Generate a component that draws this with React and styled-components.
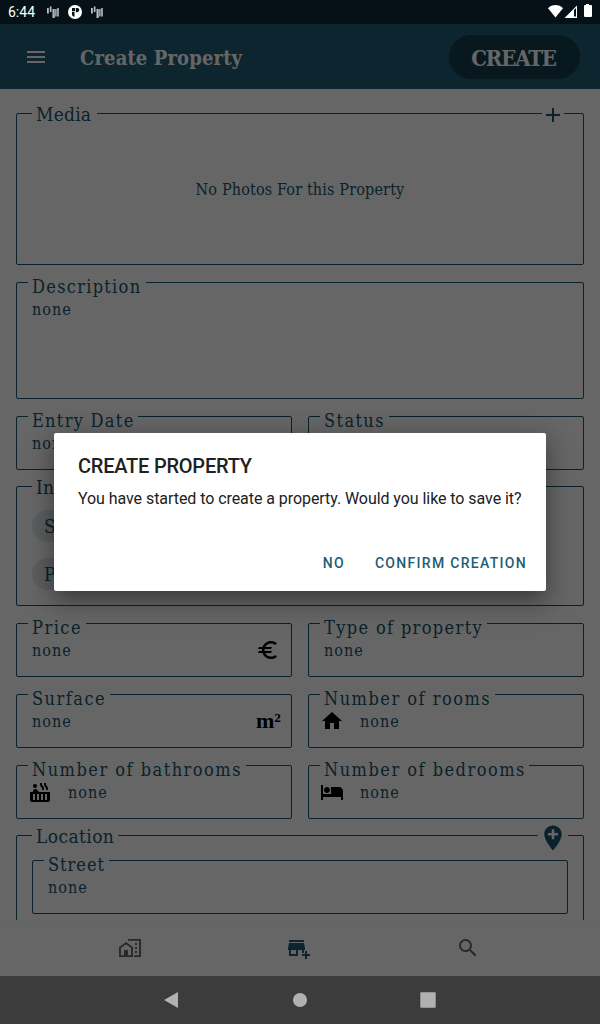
import React from "react";
import styled, { createGlobalStyle } from "styled-components";
import {
  MdMenu, MdAdd, MdEuro, MdHome, MdHotTub, MdHotel, MdAddLocation,
  MdAddBusiness, MdSearch,
} from "react-icons/md";

const slab = '"DejaVu Serif Condensed", "DejaVu Serif", serif';
const ink = "#19556b";

const GlobalStyle = createGlobalStyle`
  * { box-sizing: border-box; }
  body { margin: 0; background: #fff; font-family: Roboto, sans-serif; overflow: hidden; }
  svg { display: block; flex: none; }
`;

const Screen = styled.div`
  position: relative;
  width: 600px;
  height: 1024px;
  display: flex;
  flex-direction: column;
  overflow: hidden;
`;

const StatusBar = styled.div`
  height: 24px;
  flex: none;
  display: flex;
  align-items: center;
  justify-content: space-between;
  padding: 0 7px 0 8px;
  background: #051116;
  color: #fff;
  font-size: 14px;
  position: relative;
  z-index: 2;
`;

const StatusGroup = styled.div`
  display: flex;
  align-items: center;
`;

const Clock = styled.span`
  width: 38px;
  white-space: nowrap;
`;

const AppBar = styled.header`
  height: 65px;
  flex: none;
  display: flex;
  align-items: center;
  padding: 0 20px 0 24px;
  background: #1e5e74;
  color: #fff;
`;

const Title = styled.h1`
  margin: 2px auto 0 32px;
  font: bold 20px/28px ${slab};
  font-stretch: condensed;
  letter-spacing: 0.13px;
  white-space: nowrap;
`;

const CreateButton = styled.button`
  width: 131px;
  height: 44px;
  border: 0;
  border-radius: 22px;
  padding: 2px 2px 0 0;
  background: #123e4d;
  color: #fff;
  font: bold 22px/42px ${slab};
  font-stretch: condensed;
  letter-spacing: -1.1px;
`;

const Form = styled.main`
  flex: 1;
  min-height: 0;
  overflow: hidden;
  padding: 24px 16px 0;
  display: flex;
  flex-direction: column;
  color: ${ink};
`;

const Row = styled.div`
  display: flex;
  flex: none;
  gap: 16px;
  margin-bottom: ${(p) => p.$gap ?? 17}px;
`;

const Box = styled.section`
  position: relative;
  flex: 1;
  height: ${(p) => p.$h ?? 54}px;
  border: 1px solid ${ink};
  border-radius: 2px;
`;

const Legend = styled.span`
  position: absolute;
  left: ${(p) => (p.$group ? 15 : 11)}px;
  top: ${(p) => (p.$group ? -12 : -8)}px;
  height: 24px;
  padding: 0 4px;
  width: ${(p) => p.$w}px;
  background: #fff;
  font: ${(p) => (p.$group ? 19 : 18)}px/24px ${slab};
  font-stretch: condensed;
  letter-spacing: ${(p) => p.$track ?? 1.5}px;
  white-space: nowrap;
`;

const CornerAction = styled.span`
  position: absolute;
  right: ${(p) => p.$right}px;
  top: ${(p) => p.$top}px;
  width: ${(p) => p.$w}px;
  display: flex;
  justify-content: center;
  background: #fff;
`;

const Value = styled.div`
  display: flex;
  align-items: center;
  height: 24px;
  margin-top: 15px;
  padding: 0 7px 0 ${(p) => (p.$lead ? 11 : 15)}px;
  font: 16px/24px ${slab};
  font-stretch: condensed;
  letter-spacing: 1px;
`;

const IconSlot = styled.span`
  width: ${(p) => (p.$end ? 28 : 40)}px;
  margin-left: ${(p) => (p.$end ? "auto" : 0)};
  margin-bottom: 2px;
  display: flex;
  color: #000;
  letter-spacing: 0;
  font: bold 22px/24px "Liberation Serif", serif;
`;

const Empty = styled.p`
  margin: 0;
  padding-top: 64px;
  text-align: center;
  font: 16px/24px ${slab};
  font-stretch: condensed;
  letter-spacing: 0.16px;
`;

const Chips = styled.div`
  display: flex;
  flex-direction: column;
  align-items: flex-start;
  gap: 16px;
  padding: 23px 15px;
`;

const Chip = styled.span`
  height: 32px;
  padding: 0 12px;
  border-radius: 16px;
  background: #e3e9ec;
  font: 19px/33px ${slab};
  font-stretch: condensed;
`;

const Nested = styled.div`
  display: flex;
  padding: 24px 15px;
`;

const Tabs = styled.nav`
  height: 56px;
  flex: none;
  display: flex;
  justify-content: space-between;
  align-items: center;
  padding: 0 120px 1px 118px;
  background: #fff;
  border-top: 1px solid #f8f8f8;
  color: #666;
`;

const SystemNav = styled.div`
  height: 48px;
  flex: none;
  display: flex;
  justify-content: space-between;
  align-items: center;
  padding: 0 160px;
  background: #3c3c3c;
  position: relative;
  z-index: 2;
`;

const Scrim = styled.div`
  position: absolute;
  inset: 24px 0 48px;
  background: rgba(0, 0, 0, 0.6);
`;

const Dialog = styled.div`
  position: absolute;
  left: 54px;
  top: 433px;
  width: 492px;
  height: 158px;
  border-radius: 2px;
  background: #fff;
  color: #212121;
  padding: 19px 11px 0 24px;
  display: flex;
  flex-direction: column;
  box-shadow: 0 11px 15px -7px rgba(0, 0, 0, 0.2), 0 12px 30px 3px rgba(0, 0, 0, 0.2), 0 4px 20px 4px rgba(0, 0, 0, 0.12);
`;

const DialogTitle = styled.h2`
  margin: 0;
  font: 500 20px/28px Roboto, sans-serif;
  letter-spacing: -0.22px;
`;

const DialogText = styled.p`
  margin: 7px 0 0;
  font: 16px/24px Roboto, sans-serif;
  letter-spacing: -0.063px;
  white-space: nowrap;
`;

const DialogActions = styled.div`
  margin-top: 34px;
  display: flex;
  justify-content: flex-end;
  gap: 14px;
`;

const TextButton = styled.button`
  border: 0;
  background: none;
  padding: 0 8px;
  color: #1e5e74;
  font: 500 14px/36px Roboto, sans-serif;
  letter-spacing: 1.3px;
`;

function Field({ label, w, track, h, lead, end }) {
  return (
    <Box $h={h}>
      <Legend $w={w} $track={track}>{label}</Legend>
      <Value $lead={!!lead}>
        {lead && <IconSlot>{lead}</IconSlot>}
        none
        {end && <IconSlot $end>{end}</IconSlot>}
      </Value>
    </Box>
  );
}

function Bars() {
  return (
    <svg width="14" height="14" viewBox="0 0 14 14" fill="#b9bdbf">
      <path d="M1 3h1.800v5.500H1zM3.800 1.500h1.700v5.500H3.800zM6.500 4h2.200v9H6.500zM9.200 4h1.400v7.500H9.200zM11.200 3h1.600v8.500h-1.600z" />
    </svg>
  );
}

function HomeWork() {
  return (
    <svg width="24" height="24" viewBox="0 0 24 24">
      <path d="M10 3.900H22V20.100H16" fill="none" stroke="currentColor" strokeWidth="1.900" />
      <path d="M2 20.100V11.400L8 7.200l6 4.200v8.700z" fill="none" stroke="currentColor" strokeWidth="1.900" />
      <path d="M6 14h4v6H6zM17 7h2v2h-2zM17 11h2v2h-2zM17 15h2v2h-2z" fill="currentColor" />
    </svg>
  );
}

export default function App() {
  return (
    <Screen>
      <GlobalStyle />
      <StatusBar>
        <StatusGroup>
          <Clock>6:44</Clock>
          <Bars />
          <svg width="30" height="16" viewBox="0 0 30 16">
            <circle cx="15" cy="8" r="7" fill="#fff" />
            <path d="M12 4h3v3h-3zM15.800 4h1.400a2.100 2.100 0 0 1 0 4.200h-1.400zM12 7.800h2.500v5c-1.500 0-2.500-1-2.500-2.500z" fill="#051116" />
          </svg>
          <Bars />
        </StatusGroup>
        <svg width="46" height="16" viewBox="0 0 46 16" fill="#fff">
          <path d="M1 4.300C5-.1 12-.1 16 4.300L8.500 13.500z" />
          <path d="M17.500 14H30V1.500zM27 6V12.500H29V4z" fillRule="evenodd" />
          <path d="M39 0h3v1h2a1 1 0 0 1 1 1v10a1 1 0 0 1-1 1h-6a1 1 0 0 1-1-1V2a1 1 0 0 1 1-1h1z" />
        </svg>
      </StatusBar>
      <AppBar>
        <MdMenu size={24} />
        <Title>Create Property</Title>
        <CreateButton>CREATE</CreateButton>
      </AppBar>
      <Form>
        <Row>
          <Box $h={152}>
            <Legend $group $w={65} $track={0.2}>Media</Legend>
            <CornerAction $right={19} $top={-11} $w={22}><MdAdd size={24} /></CornerAction>
            <Empty>No Photos For this Property</Empty>
          </Box>
        </Row>
        <Row><Field label="Description" w={118} track={1.3} h={117} /></Row>
        <Row $gap={16}>
          <Field label="Entry Date" w={110} track={1.3} />
          <Field label="Status" w={69} track={1.4} />
        </Row>
        <Row>
          <Box $h={120}>
            <Legend $group $w={50} $track={0.2}>Info</Legend>
            <Chips>
              <Chip>School</Chip>
              <Chip>Park</Chip>
            </Chips>
          </Box>
        </Row>
        <Row>
          <Field label="Price" w={58} end={<MdEuro size={24} />} />
          <Field label="Type of property" w={167} track={1.37} />
        </Row>
        <Row>
          <Field label="Surface" w={82} end="m²" />
          <Field label="Number of rooms" w={175} lead={<MdHome size={24} />} />
        </Row>
        <Row $gap={16}>
          <Field label="Number of bathrooms" w={218} lead={<MdHotTub size={24} />} />
          <Field label="Number of bedrooms" w={209} lead={<MdHotel size={24} />} />
        </Row>
        <Row>
          <Box $h={200}>
            <Legend $group $w={86} $track={0.4}>Location</Legend>
            <CornerAction $right={15} $top={-13} $w={30}><MdAddLocation size={30} /></CornerAction>
            <Nested><Field label="Street" w={65} track={1} /></Nested>
          </Box>
        </Row>
      </Form>
      <Tabs>
        <HomeWork />
        <MdAddBusiness size={24} color="#1e5e74" />
        <MdSearch size={24} />
      </Tabs>
      <Scrim />
      <Dialog role="dialog">
        <DialogTitle>CREATE PROPERTY</DialogTitle>
        <DialogText>You have started to create a property. Would you like to save it?</DialogText>
        <DialogActions>
          <TextButton>NO</TextButton>
          <TextButton>CONFIRM CREATION</TextButton>
        </DialogActions>
      </Dialog>
      <SystemNav>
        <svg width="24" height="24" viewBox="0 0 24 24" fill="#b1b1b1"><path d="M18 4v16L4 12z" /></svg>
        <svg width="24" height="24" viewBox="0 0 24 24" fill="#b1b1b1"><circle cx="12" cy="12" r="7" /></svg>
        <svg width="24" height="24" viewBox="0 0 24 24" fill="#b1b1b1"><rect x="4.300" y="4.300" width="15.400" height="15.400" rx="1" /></svg>
      </SystemNav>
    </Screen>
  );
}
